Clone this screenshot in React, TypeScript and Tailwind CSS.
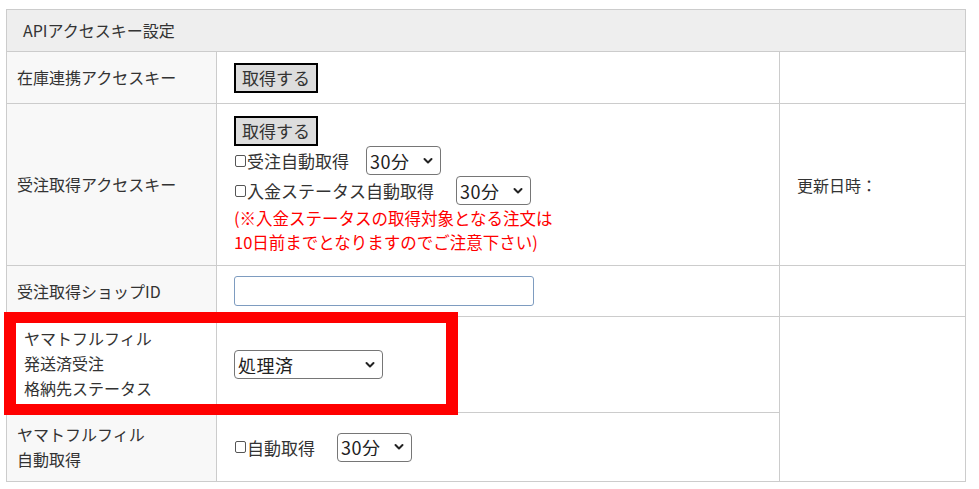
import React from "react";

const FONT = { fontFamily: '"Noto Sans CJK JP", "Noto Sans", sans-serif' };

function Chevron() {
  return (
    <svg
      width="10"
      height="7"
      viewBox="0 0 10 7"
      className="pointer-events-none absolute right-[8px] top-1/2 -translate-y-1/2"
    >
      <path d="M1.5 1.5 L5 5 L8.5 1.5" fill="none" stroke="#222" strokeWidth="2" strokeLinecap="round" strokeLinejoin="round" />
    </svg>
  );
}

function Select({ value, options, className }: { value: string; options: string[]; className: string }) {
  return (
    <div className={`relative shrink-0 ${className}`}>
      <select
        defaultValue={value}
        className="h-full w-full appearance-none rounded-[4px] border border-[#767676] bg-white pl-[3px] text-[18px] leading-none tracking-[0.5px] text-[#222] outline-none"
      >
        {options.map((o) => (
          <option key={o}>{o}</option>
        ))}
      </select>
      <Chevron />
    </div>
  );
}

function Check() {
  return <span className="ml-[1px] mr-[1px] inline-block h-[12px] w-[11px] shrink-0 rounded-[2px] border border-[#555] bg-white" />;
}

function GetButton() {
  return (
    <button className="h-[30px] w-[84px] border-2 border-black bg-[#dddddd] text-[17px] leading-none text-[#333]">
      取得する
    </button>
  );
}

const minutes = ["5分", "10分", "15分", "30分", "60分"];

export default function App() {
  const label = "flex flex-col justify-center border-r border-b border-[#cccccc] bg-[#f8f8f8] pl-[10px] text-[16px] leading-[25px]";
  const content = "flex flex-col justify-center border-r border-b border-[#cccccc] bg-white pl-[17px] text-[16px]";
  const side = "border-r border-b border-[#cccccc] bg-white";

  return (
    <div className="relative h-[489px] w-[979px] bg-white text-[#333]" style={FONT}>
      <div className="absolute left-[6px] top-[9px]">
        <div className="grid grid-cols-[210px_563px_186px] grid-rows-[42px_52px_162px_51px_96px_69px] border-l border-t border-[#cccccc]">
          {/* header */}
          <div className="col-span-3 flex items-center border-r border-b border-[#cccccc] bg-[#eeeeee] pb-[2px] pl-[16px] text-[16px]">
            APIアクセスキー設定
          </div>

          {/* row 1 */}
          <div className={label}>在庫連携アクセスキー</div>
          <div className={content}>
            <GetButton />
          </div>
          <div className={side} />

          {/* row 2 */}
          <div className={label}>受注取得アクセスキー</div>
          <div className={content}>
            <GetButton />
            <div className="flex h-[30px] items-center">
              <Check />
              <span className="text-[17px] leading-none">受注自動取得</span>
              <Select value="30分" options={minutes} className="ml-[17px] h-[29px] w-[75px]" />
            </div>
            <div className="flex h-[30px] items-center">
              <Check />
              <span className="text-[17px] leading-none">入金ステータス自動取得</span>
              <Select value="30分" options={minutes} className="ml-[22px] h-[29px] w-[75px]" />
            </div>
            <p className="text-[16.5px] leading-[24px] text-[#ff0000]">
              (※入金ステータスの取得対象となる注文は
              <br />
              10日前までとなりますのでご注意下さい)
            </p>
          </div>
          <div className={`${side} flex items-center pl-[17px] text-[16px]`}>更新日時：</div>

          {/* row 3 */}
          <div className={label}>受注取得ショップID</div>
          <div className={content}>
            <input className="h-[30px] w-[300px] rounded-[3px] border border-[#7e9cc0] bg-white px-[4px] text-[16px] outline-none" />
          </div>
          <div className={side} />

          {/* row 4 */}
          <div className={`${label} bg-white pb-[2px] pl-[17px]`}>
            <span>ヤマトフルフィル</span>
            <span>発送済受注</span>
            <span>格納先ステータス</span>
          </div>
          <div className={content}>
            <Select value="処理済" options={["未処理", "処理済"]} className="h-[29px] w-[149px]" />
          </div>
          <div className={`${side} row-span-2`} />

          {/* row 5 */}
          <div className={label}>
            <span>ヤマトフルフィル</span>
            <span>自動取得</span>
          </div>
          <div className={content}>
            <div className="flex h-[30px] items-center">
              <Check />
              <span className="text-[17px] leading-none">自動取得</span>
              <Select value="30分" options={minutes} className="ml-[22px] h-[29px] w-[75px]" />
            </div>
          </div>
        </div>
      </div>

      {/* highlight box */}
      <div className="pointer-events-none absolute left-[4px] top-[312px] h-[103px] w-[454px] border-x-[12px] border-y-[11px] border-[#ff0000]" />
    </div>
  );
}
